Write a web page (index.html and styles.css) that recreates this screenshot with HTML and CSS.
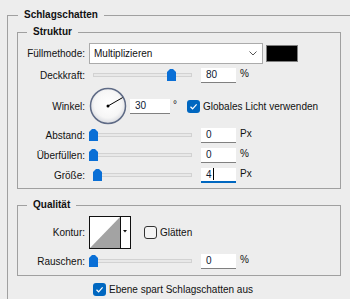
FILE: index.html
```html
<!DOCTYPE html>
<html lang="de">
<head>
  <meta charset="UTF-8">
  <title>Schlagschatten</title>
  <link rel="stylesheet" href="styles.css">
</head>
<body>
  <fieldset class="group outer">
    <legend>Schlagschatten</legend>

    <fieldset class="group sub struktur">
      <legend>Struktur</legend>
      <div class="row row-mode">
        <span class="label">Füllmethode:</span>
        <div class="select">
          <span>Multiplizieren</span>
          <svg width="8" height="5" viewBox="0 0 8 5"><path d="M0.5 0.5 L4 4 L7.5 0.5" fill="none" stroke="#555" stroke-width="1"/></svg>
        </div>
        <div class="swatch"></div>
      </div>
      <div class="row row-opacity">
        <span class="label">Deckkraft:</span>
        <div class="slider" style="--v: .83">
          <div class="track"></div>
          <svg class="thumb" width="9" height="12" viewBox="0 0 9 12"><path d="M3 0 H6 L9 3 V12 H0 V3 Z" fill="#0a6fd6"/></svg>
        </div>
        <div class="field">80</div>
        <span class="unit">%</span>
      </div>
      <div class="row row-angle">
        <span class="label">Winkel:</span>
        <svg class="dial" width="38" height="38" viewBox="0 0 38 38">
          <defs>
            <radialGradient id="dialFill" cx="50%" cy="45%" r="55%">
              <stop offset="0%" stop-color="#ffffff"/>
              <stop offset="70%" stop-color="#f6f6f6"/>
              <stop offset="100%" stop-color="#d9dbe0"/>
            </radialGradient>
          </defs>
          <circle cx="19" cy="19" r="17.5" fill="url(#dialFill)" stroke="#5f6b86" stroke-width="1.5"/>
          <line x1="19" y1="19" x2="33.6" y2="10.6" stroke="#000" stroke-width="1"/>
          <circle cx="19" cy="19" r="1.5" fill="#000"/>
        </svg>
        <div class="field angle">30</div>
        <span class="deg">°</span>
        <span class="check on">
          <svg width="13" height="13" viewBox="0 0 13 13"><path d="M3.5 6.8 L5.6 8.8 L9.6 4.4" fill="none" stroke="#fff" stroke-width="1.2"/></svg>
        </span>
        <span class="check-text">Globales Licht verwenden</span>
      </div>
      <div class="row">
        <span class="label">Abstand:</span>
        <div class="slider" style="--v: 0">
          <div class="track"></div>
          <svg class="thumb" width="9" height="12" viewBox="0 0 9 12"><path d="M3 0 H6 L9 3 V12 H0 V3 Z" fill="#0a6fd6"/></svg>
        </div>
        <div class="field">0</div>
        <span class="unit">Px</span>
      </div>
      <div class="row">
        <span class="label">Überfüllen:</span>
        <div class="slider" style="--v: 0">
          <div class="track"></div>
          <svg class="thumb" width="9" height="12" viewBox="0 0 9 12"><path d="M3 0 H6 L9 3 V12 H0 V3 Z" fill="#0a6fd6"/></svg>
        </div>
        <div class="field">0</div>
        <span class="unit">%</span>
      </div>
      <div class="row">
        <span class="label">Größe:</span>
        <div class="slider" style="--v: .045">
          <div class="track"></div>
          <svg class="thumb" width="9" height="12" viewBox="0 0 9 12"><path d="M3 0 H6 L9 3 V12 H0 V3 Z" fill="#0a6fd6"/></svg>
        </div>
        <div class="field focused">4<span class="caret"></span></div>
        <span class="unit">Px</span>
      </div>
    </fieldset>

    <fieldset class="group sub quality">
      <legend>Qualität</legend>
      <div class="row row-contour">
        <span class="label">Kontur:</span>
        <svg class="contour" width="42" height="33" viewBox="0 0 42 33">
          <rect x="0.5" y="0.5" width="41" height="32" fill="#fff" stroke="#111"/>
          <polygon points="1,32 31,1 31,32" fill="#a3a3a3"/>
          <line x1="31.5" y1="0" x2="31.5" y2="33" stroke="#111"/>
          <polygon points="34,14 38,14 36,16.5" fill="#111"/>
        </svg>
        <span class="check off"></span>
        <span class="check-text">Glätten</span>
      </div>
      <div class="row row-noise">
        <span class="label">Rauschen:</span>
        <div class="slider" style="--v: 0">
          <div class="track"></div>
          <svg class="thumb" width="9" height="12" viewBox="0 0 9 12"><path d="M3 0 H6 L9 3 V12 H0 V3 Z" fill="#0a6fd6"/></svg>
        </div>
        <div class="field">0</div>
        <span class="unit">%</span>
      </div>
    </fieldset>

    <div class="row row-final">
      <span class="check on">
        <svg width="13" height="13" viewBox="0 0 13 13"><path d="M3.5 6.8 L5.6 8.8 L9.6 4.4" fill="none" stroke="#fff" stroke-width="1.2"/></svg>
      </span>
      <span class="check-text">Ebene spart Schlagschatten aus</span>
    </div>
  </fieldset>
</body>
</html>
```

FILE: styles.css
```css
body { margin: 0; padding: 7px 0 0 7px; height: 299px; box-sizing: border-box; overflow: hidden; background: #ededed; color: #111; font: 10px "Liberation Sans", Arial, sans-serif; }

.group { margin: 0; padding: 0; min-width: 0; border: 1px solid #a0a0a0; box-sizing: border-box; }
.group > legend { margin-left: 9px; padding: 0 6px; font-weight: bold; font-size: 10px; line-height: 16px; }
.outer { width: 343px; height: 292px; border-right: none; border-bottom: none; }
.outer > legend { margin-left: 10px; }
.sub { width: 324px; margin-left: 9px; }
.struktur { margin-top: 1px; padding: 3px 0 3px; }
.quality { margin-top: 8px; padding: 3px 0 4px; }

.row { display: flex; align-items: center; height: 20px; white-space: nowrap; }
.row-mode { height: 21px; }
.row-opacity { margin-top: 1px; }
.row-angle { height: 38px; margin-top: 2px; }
.row-contour { height: 33px; }
.row-noise { margin-top: 2px; }
.row-final { margin-top: 3px; padding-left: 85px; }

.label { flex: none; width: 67px; margin-right: 4px; text-align: right; }

.select { flex: none; display: flex; align-items: center; justify-content: space-between; width: 174px; height: 21px; padding: 0 5px 0 4px; box-sizing: border-box; background: #fff; border: 1px solid #ababab; }
.swatch { flex: none; width: 32px; height: 17px; margin-left: 3px; background: #000; border: 1px solid #7f7f7f; box-sizing: border-box; }

.slider { flex: none; position: relative; width: 103px; height: 12px; padding: 4px 0 0 4px; box-sizing: border-box; }
.track { height: 4px; background: #e8e8e8; border: 1px solid #d2d2d2; box-sizing: border-box; }
.thumb { position: absolute; top: 0; left: calc(var(--v) * 94px); display: block; }

.field { flex: none; width: 35px; height: 15px; margin-left: 9px; padding-left: 5px; box-sizing: border-box; background: #fff; border-bottom: 1px solid #808080; line-height: 14px; color: #0d1a33; }
.field.angle { width: 40px; margin-left: 3px; }
.field.focused { border-bottom: 2px solid #0067c0; }
.caret { display: inline-block; width: 1px; height: 12px; margin-left: 1px; background: #000; vertical-align: -2px; }
.unit { margin-left: 4px; margin-bottom: 3px; }
.deg { margin-left: 3px; margin-bottom: 3px; }

.dial { flex: none; display: block; }
.contour { flex: none; display: block; }

.check { flex: none; width: 13px; height: 13px; border-radius: 3px; box-sizing: border-box; }
.check svg { display: block; }
.check.on { background: #0067c0; }
.check.off { background: #f4f4f4; border: 1px solid #333; }
.row-angle .check { margin-left: 10px; }
.row-contour .check { margin-left: 13px; }
.check-text { margin-left: 3px; }
```
